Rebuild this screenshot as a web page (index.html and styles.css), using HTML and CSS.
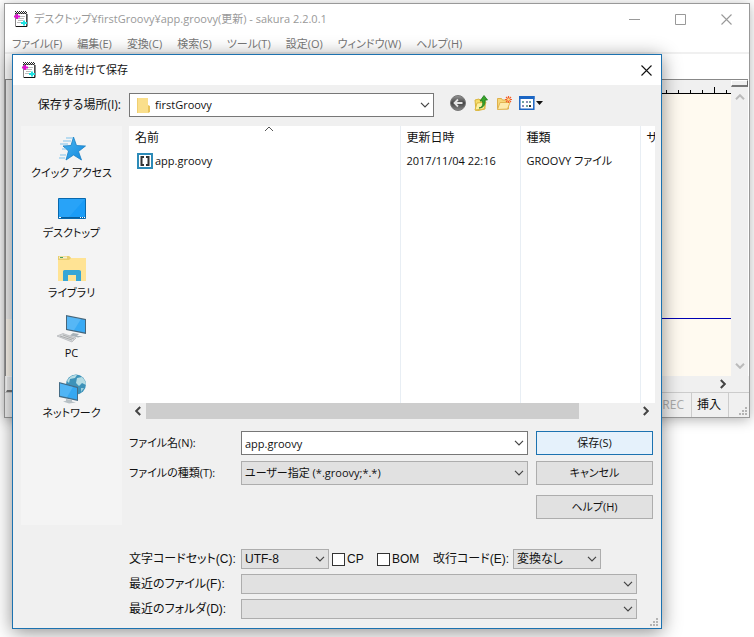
FILE: index.html
```
<!DOCTYPE html>
<html lang="ja">
<head>
  <meta charset="UTF-8">
  <meta name="viewport" content="width=device-width, initial-scale=1">
  <title>名前を付けて保存</title>
  <link rel="stylesheet" href="styles.css">
</head>
<body>
  <svg class="defs" aria-hidden="true">
    <symbol id="chevron" viewBox="0 0 10 6"><path d="M1 .8l4 4 4-4" fill="none" stroke="currentColor" stroke-width="1.2"/></symbol>
    <symbol id="arrow" viewBox="0 0 10 6"><path d="M1 .8l4 4 4-4" fill="none" stroke="currentColor" stroke-width="2"/></symbol>
    <symbol id="close" viewBox="0 0 11 11"><path d="M.5.5l10 10M10.5.5l-10 10" fill="none" stroke="currentColor" stroke-width="1.1"/></symbol>
    <symbol id="notepad" viewBox="0 0 14 16">
      <path d="M1.500 2.500h11v13h-11z" fill="#fff" stroke="#888"/>
      <path d="M13 3v12.500H2" fill="none" stroke="#111"/>
      <path d="M1 .5h12M2 1.500h12M1 2.500h12" stroke="#222" stroke-dasharray="1 1"/>
      <path d="M5 5.500h6M4 7.500h6M4 9.500h5M3 11.500h5" stroke="#bbb"/>
      <path d="M2 3h2v1.500h2v2H4V8H2V6.500H0v-2h2z" fill="#e010d0"/>
      <path d="M9 9.500h2V11h2v2h-2v1.500H9V13H7v-2h2z" fill="#20e0e0"/>
    </symbol>
    <symbol id="grip" viewBox="0 0 8 8"><path d="M6 0h2v2H6zM3 3h2v2H3zM6 3h2v2H6zM0 6h2v2H0zM3 6h2v2H3zM6 6h2v2H6z" fill="#b4b4b4"/></symbol>
  </svg>

  <!-- エディタ本体 -->
  <div class="window">
    <header class="titlebar">
      <svg class="app-icon"><use href="#notepad"/></svg>
      <span class="title">デスクトップ¥firstGroovy¥app.groovy(更新) - sakura 2.2.0.1</span>
      <button class="winbtn" aria-label="最小化"><svg viewBox="0 0 11 11"><path d="M0 5.500h11" stroke="currentColor"/></svg></button>
      <button class="winbtn" aria-label="最大化"><svg viewBox="0 0 11 11"><path d="M.5.5h10v10H.5z" fill="none" stroke="currentColor"/></svg></button>
      <button class="winbtn" aria-label="閉じる"><svg><use href="#close"/></svg></button>
    </header>
    <nav class="menu">
      <a href="#">ファイル(F)</a>
      <a href="#">編集(E)</a>
      <a href="#">変換(C)</a>
      <a href="#">検索(S)</a>
      <a href="#">ツール(T)</a>
      <a href="#">設定(O)</a>
      <a href="#">ウィンドウ(W)</a>
      <a href="#">ヘルプ(H)</a>
    </nav>
    <div class="toolbar"></div>
    <div class="editor">
      <div class="gutter"></div>
      <div class="page">
        <div class="ruler"></div>
        <div class="lines"></div>
      </div>
      <div class="vscroll">
        <span class="splitter"></span>
        <svg class="up"><use href="#arrow"/></svg>
        <svg class="down"><use href="#arrow"/></svg>
      </div>
    </div>
    <div class="hscroll">
      <span class="pane"></span>
      <svg class="right"><use href="#arrow"/></svg>
    </div>
    <footer class="status">
      <span class="off">REC</span>
      <span>挿入</span>
      <span class="corner"><svg><use href="#grip"/></svg></span>
    </footer>
  </div>

  <!-- 保存ダイアログ -->
  <div class="dialog" role="dialog" aria-labelledby="dialogTitle">
    <header class="titlebar">
      <svg class="app-icon"><use href="#notepad"/></svg>
      <span class="title" id="dialogTitle">名前を付けて保存</span>
      <button class="winbtn" aria-label="閉じる"><svg><use href="#close"/></svg></button>
    </header>

    <div class="lookin">
      <label for="lookin">保存する場所(I):</label>
      <div class="combo white folder">
        <svg class="folder-icon" viewBox="0 0 13 16"><path d="M0 1h11v15H0z" fill="#fadf8c"/><path d="M11 1v15l2-1V9l-2-1z" fill="#e9c35c"/><path d="M.5 1v15" stroke="#f0cf72"/></svg>
        <select id="lookin"><option>firstGroovy</option></select>
        <svg class="chev"><use href="#chevron"/></svg>
      </div>
      <div class="tools">
        <button aria-label="戻る"><svg viewBox="0 0 16 16"><defs><linearGradient id="ball" x2="0" y2="1"><stop stop-color="#999"/><stop offset=".5" stop-color="#444"/><stop offset="1" stop-color="#888"/></linearGradient></defs><circle cx="8" cy="8" r="7.500" fill="url(#ball)" stroke="#777"/><path d="M12.500 8H5M8 4.500L4.500 8 8 11.500" fill="none" stroke="#e4e4e4" stroke-width="1.800"/></svg></button>
        <button aria-label="上へ"><svg viewBox="0 0 16 16"><path d="M2 5l4-1 1 1 5-1v10l-9 2z" fill="#f6dc68" stroke="#d9b53c"/><path d="M2 15l2-7 9-1-2 7z" fill="#fdf0a0" stroke="#dcb840"/><path d="M6 13c4-1 4-4 3.500-7H7l4-5.500L14.500 5H12c.5 4-1 8-6 8z" fill="#37a52c" stroke="#217a1c" stroke-width=".8"/></svg></button>
        <button aria-label="新しいフォルダー"><svg viewBox="0 0 16 16"><path d="M1.500 3.500h4l1 1.500h6v9h-11z" fill="#f6d778" stroke="#dfb04a"/><path d="M1.500 14.500l2.500-7h10l-2.500 6.500z" fill="#fdebac" stroke="#e2b653"/><path d="M12.500 1v7M9 4.500h7M10 2l5 5M15 2l-5 5" stroke="#f2602c" stroke-width="1.200"/><circle cx="12.500" cy="4.500" r="1.300" fill="#ffe08a"/></svg></button>
        <button class="view" aria-label="表示"><svg viewBox="0 0 24 16"><path d="M.8 1.800h14v12.500H.8z" fill="#fff" stroke="#1c66c4" stroke-width="1.500"/><path d="M0 1h15.500v3H0z" fill="#1c66c4"/><path d="M3 6h2v2H3zM10 6h2v2h-2zM7 10h2v2H7z" fill="#71a5a0"/><path d="M7 6h2v2H7zM3 10h2v2H3z" fill="#8c8fb8"/><path d="M10 10h2v2h-2z" fill="#333"/><path d="M17 6h7l-3.500 4z" fill="#111"/></svg></button>
      </div>
    </div>

    <div class="main">
      <nav class="places">
        <a href="#">
          <svg viewBox="0 0 32 32"><defs><linearGradient id="blue" x2="1" y2="1"><stop stop-color="#49b7f2"/><stop offset="1" stop-color="#1387dc"/></linearGradient></defs><path d="M17.500 4l3 8.500 9 .5-7 5.500 3 8.500-8-5-7.500 5 2.500-9-5.500-5 8-.5z" fill="url(#blue)" stroke="#187fc4" stroke-width=".8"/><path d="M10 5h7M7 8h8M4 11h8M6 16h4M4 22h6M3 25h6" stroke="#7fc3ec"/></svg>
          クイック アクセス
        </a>
        <a href="#">
          <svg viewBox="0 0 32 32"><path d="M2.500 5.500h27v20h-27z" fill="#1a9cf7" stroke="#0868ad"/><path d="M3 6h26L13 24H3z" fill="#35a9fa" opacity=".5"/><path d="M3 24.500h26" stroke="#075d9c"/><path d="M3 24.500h2M24 24.500h1M26 24.500h1M28 24.500h1" stroke="#fff"/></svg>
          デスクトップ
        </a>
        <a href="#">
          <svg viewBox="0 0 32 32"><path d="M2 3h11l2 2h15v23H2z" fill="#ffe394"/><path d="M2 3h11l2 2-2 2H2z" fill="#e8ce6c"/><path d="M3 3.500h8v2H3z" fill="#f6efd0"/><path d="M4 4.500h3" stroke="#4aa45c"/><path d="M7 28V18.500q0-1.500 1.500-1.500h14.500q2 0 2 1.500V28h-5v-6h-8v6z" fill="#36a6d6"/></svg>
          ライブラリ
        </a>
        <a href="#">
          <svg viewBox="0 0 32 32"><path d="M10 2l20 4v15l-20-4z" fill="#476579"/><path d="M11 3.500l18 3.500v12.500l-18-3.500z" fill="#39aaf4"/><path d="M11 3.500L25 6l-7 11.200-7-1.300z" fill="#74c4f8" opacity=".5"/><path d="M17 20l6 1-2 2 6 0-5 1.500-8-2z" fill="#a8b2b8"/><path d="M1 23l6-2.500 13 4.500-4 4z" fill="#d5d8da" stroke="#a8aaac" stroke-width=".6"/><path d="M4 23l12 4M7 22l11 4" stroke="#999" stroke-width=".7"/></svg>
          PC
        </a>
        <a href="#">
          <svg viewBox="0 0 32 32"><circle cx="20" cy="11.500" r="10" fill="#3d92b9"/><path d="M11 8q4-7 10-6l-2 3-5 1-1 4zM21 5l5-1q4 4 4 8l-4-2-3 3-3-3z" fill="#b5dce4"/><path d="M25 15l3 0-3 4z" fill="#9bd0df"/><path d="M3 9l19 5v14L3 24z" fill="#456c86"/><path d="M4 10.500l17 4.500v11.500L4 22.800z" fill="#35a8f2"/><path d="M4 10.500l13 3.500-6 10.300-7-1.500z" fill="#6dc1f7" opacity=".5"/><path d="M10 26l6 1v1.500l4 1-7 1-6-2 3-.7z" fill="#b7c0c5"/></svg>
          ネットワーク
        </a>
      </nav>

      <div class="content">
        <div class="files">
          <table>
            <colgroup><col><col class="date"><col class="type"><col class="size"></colgroup>
            <thead>
              <tr>
                <th>名前<svg class="sort" viewBox="0 0 10 6"><path d="M1 5l4-4 4 4" fill="none" stroke="#555"/></svg></th>
                <th>更新日時</th>
                <th>種類</th>
                <th>サイズ</th>
              </tr>
            </thead>
            <tbody>
              <tr>
                <td><svg class="file-icon" viewBox="0 0 16 16"><path d="M0 0h16v16H0z" fill="#2d8bb8"/><path d="M2 2h12v12H2z" fill="#fff"/><path d="M7 4H4.500v8H7M9 4h2.500v8H9" fill="none" stroke="#333" stroke-width="2"/></svg>app.groovy</td>
                <td>2017/11/04 22:16</td>
                <td>GROOVY ファイル</td>
                <td></td>
              </tr>
              <tr class="rest"><td></td><td></td><td></td><td></td></tr>
            </tbody>
          </table>
        </div>
        <div class="scrollbar">
          <svg class="left"><use href="#arrow"/></svg>
          <div class="track"><div class="thumb"></div></div>
          <svg class="right"><use href="#arrow"/></svg>
        </div>

        <form class="form">
          <label for="filename">ファイル名(N):</label>
          <div class="combo white">
            <input id="filename" type="text" value="app.groovy">
            <svg class="chev"><use href="#chevron"/></svg>
          </div>
          <button type="button" class="btn default">保存(S)</button>

          <label for="filetype">ファイルの種類(T):</label>
          <div class="combo">
            <select id="filetype"><option>ユーザー指定 (*.groovy;*.*)</option></select>
            <svg class="chev"><use href="#chevron"/></svg>
          </div>
          <button type="button" class="btn">キャンセル</button>
          <button type="button" class="btn help">ヘルプ(H)</button>
        </form>
      </div>
    </div>

    <form class="extra">
      <label for="charset">文字コードセット(C):</label>
      <div class="options">
        <div class="combo short">
          <select id="charset"><option>UTF-8</option></select>
          <svg class="chev"><use href="#chevron"/></svg>
        </div>
        <label class="check cp"><input type="checkbox">CP</label>
        <label class="check bom"><input type="checkbox">BOM</label>
        <label class="eol" for="eol">改行コード(E):</label>
        <div class="combo short">
          <select id="eol"><option>変換なし</option></select>
          <svg class="chev"><use href="#chevron"/></svg>
        </div>
      </div>

      <label for="recentFile">最近のファイル(F):</label>
      <div class="combo">
        <select id="recentFile"></select>
        <svg class="chev"><use href="#chevron"/></svg>
      </div>

      <label for="recentFolder">最近のフォルダ(D):</label>
      <div class="combo">
        <select id="recentFolder"></select>
        <svg class="chev"><use href="#chevron"/></svg>
      </div>
    </form>
    <svg class="dialog-grip"><use href="#grip"/></svg>
  </div>
</body>
</html>
```
FILE: styles.css
```
* {
  box-sizing: border-box;
}
body {
  margin: 0;
  padding-top: 3px;
  min-height: 100vh;
  position: relative;
  overflow: hidden;
  background: #fff;
  color: #111;
  font-family: "Open Sans", "Noto Sans CJK JP", sans-serif;
  font-size: 11px;
  line-height: 16px;
  font-feature-settings: "palt";
}
a {
  color: inherit;
  text-decoration: none;
}
button, input, select {
  font: inherit;
  font-feature-settings: inherit;
  color: inherit;
  margin: 0;
}
svg {
  display: block;
  flex: none;
}
.defs {
  position: absolute;
  width: 0;
  height: 0;
}

/* エディタ本体 */
.window {
  margin: 0 4px;
  border: 1px solid #999;
  background: #fff;
  box-shadow: 0 2px 12px rgba(0, 0, 0, 0.3);
}
.titlebar {
  display: flex;
  align-items: center;
  height: 30px;
  padding-left: 9px;
  background: #fff;
}
.app-icon {
  width: 14px;
  height: 16px;
  margin-right: 6px;
}
.title {
  flex: 1;
  white-space: nowrap;
}
.window .titlebar {
  color: #999;
}
.winbtn {
  width: 46px;
  height: 30px;
  padding: 0;
  border: 0;
  background: none;
  display: flex;
  align-items: center;
  justify-content: center;
}
.winbtn svg {
  width: 11px;
  height: 11px;
}
.dialog .winbtn {
  width: 30px;
}
.menu {
  display: flex;
  gap: 15px;
  height: 20px;
  padding: 2px 7px 0;
  border-bottom: 2px solid #f0f0f0;
  color: #777;
  white-space: nowrap;
}
.toolbar {
  height: 25px;
}
.editor {
  display: flex;
  height: 297px;
  border-top: 1px solid #888;
  border-left: 1px solid #888;
  margin-right: 1px;
}
.gutter {
  width: 10px;
  background: linear-gradient(#f0f0f0 239px, #fffaf0 239px);
}
.page {
  flex: 1;
  display: flex;
  flex-direction: column;
  background: #fffaf0;
}
/* 目盛り: 小 12px、大 120px */
.ruler {
  height: 14px;
  border-bottom: 1px solid #000;
  background:
    repeating-linear-gradient(to right, transparent 0 98px, #000 98px 99px, transparent 99px 120px) 0 100% / 100% 6px no-repeat,
    repeating-linear-gradient(to right, transparent 0 2px, #000 2px 3px, transparent 3px 12px) 0 100% / 100% 3px no-repeat,
    #f0f0f0;
}
.lines {
  height: 225px;
  border-bottom: 1px solid #0000b4;
}
.vscroll {
  width: 17px;
  display: flex;
  flex-direction: column;
  align-items: center;
  background: #f0f0f0;
  color: #bbb;
}
.splitter {
  width: 17px;
  height: 7px;
  background: #f0f0f0;
  border: 1px solid #fff;
  border-right-color: #666;
  border-bottom: 2px solid #777;
}
.up, .down, .left, .right {
  width: 10px;
  height: 6px;
}
.up {
  margin-top: 7px;
  transform: rotate(180deg);
}
.down {
  margin-top: auto;
  margin-bottom: 7px;
}
.left {
  transform: rotate(90deg);
}
.right {
  transform: rotate(-90deg);
}
.hscroll {
  height: 16px;
  display: flex;
  align-items: center;
  justify-content: space-between;
  padding: 0 21px 0 1px;
  background: #f0f0f0;
  color: #444;
}
.pane {
  width: 8px;
  height: 16px;
  border: 1px solid #fff;
  border-right-color: #666;
  border-bottom: 2px solid #777;
}
.status {
  display: flex;
  justify-content: flex-end;
  height: 25px;
  border-top: 1px solid #ccc;
  background: #f0f0f0;
  font-size: 12px;
}
.status span {
  padding: 4px 7px 0 5px;
  border-right: 1px solid #ccc;
}
.status .off {
  color: #aaa;
}
.status .corner {
  display: flex;
  align-items: flex-end;
  justify-content: flex-end;
  width: 20px;
  padding: 2px;
  border: 0;
}
.corner svg, .dialog-grip {
  width: 8px;
  height: 8px;
}

/* ダイアログ */
.dialog {
  position: absolute;
  top: 54px;
  left: 12px;
  right: 92px;
  padding-bottom: 9px;
  border: 1px solid #1c72b0;
  background: #f0f0f0;
  box-shadow: 0 3px 18px rgba(0, 0, 0, 0.45);
}
.lookin {
  display: flex;
  align-items: center;
  padding: 8px 8px 9px;
}
.lookin label {
  width: 100px;
  margin-right: 8px;
  font-size: 12px;
  text-align: right;
}
.lookin .combo {
  flex: 1;
}
.combo {
  position: relative;
  height: 24px;
}
.combo select, .combo input {
  display: block;
  width: 100%;
  height: 100%;
  padding: 0 20px 0 3px;
  border: 1px solid #adadad;
  border-radius: 0;
  background: #e1e1e1;
  appearance: none;
  outline: 0;
}
.combo.white select, .combo.white input {
  border-color: #777;
  background: #fff;
}
.combo.folder select {
  padding-left: 25px;
}
.folder-icon {
  position: absolute;
  top: 4px;
  left: 8px;
  width: 13px;
  height: 16px;
}
.chev {
  position: absolute;
  top: calc(50% - 3px);
  right: 4px;
  width: 10px;
  height: 6px;
  color: #444;
  pointer-events: none;
}
.tools {
  display: flex;
  gap: 7px;
  width: 219px;
  padding: 0 0 5px 16px;
}
.tools button {
  padding: 0;
  border: 0;
  background: none;
}
.tools svg {
  width: 16px;
  height: 16px;
}
.tools .view svg {
  width: 24px;
}
.main {
  display: flex;
  gap: 7px;
  padding: 0 6px 0 8px;
}
.places {
  width: 101px;
  display: flex;
  flex-direction: column;
  gap: 12px;
  padding-top: 7px;
  background: #f4f4f4;
  text-align: center;
  white-space: nowrap;
}
.places svg {
  width: 32px;
  height: 32px;
  margin: 0 auto;
}
.content {
  flex: 1;
  min-width: 0;
}
.files {
  height: 277px;
  overflow: hidden;
  background: #fff;
}
.files table {
  width: 100%;
  height: 100%;
  table-layout: fixed;
  border-collapse: collapse;
}
.date, .type {
  width: 120px;
}
.size {
  width: 15px;
}
th, td {
  height: 23px;
  padding: 0 6px;
  border-left: 1px solid #e8eef4;
  font-weight: normal;
  text-align: left;
  white-space: nowrap;
  overflow: hidden;
}
th {
  position: relative;
  font-size: 12px;
}
th:first-child, td:first-child {
  border-left: 0;
}
.files td:first-child {
  padding-left: 8px;
}
.rest td {
  height: auto;
}
.sort {
  position: absolute;
  top: 0;
  left: 50%;
  width: 10px;
  height: 6px;
}
.file-icon {
  display: inline-block;
  width: 16px;
  height: 16px;
  margin-right: 2px;
  vertical-align: top;
}
.scrollbar {
  display: flex;
  align-items: center;
  gap: 3px;
  height: 16px;
  padding: 0 4px;
  color: #444;
}
.track {
  flex: 1;
  height: 16px;
}
.thumb {
  width: 88%;
  height: 100%;
  background: #cdcdcd;
}
.form {
  display: grid;
  grid-template-columns: 104px 1fr 117px;
  align-items: center;
  gap: 6px 8px;
  padding: 12px 2px 6px 0;
}
.btn {
  height: 24px;
  padding: 0;
  border: 1px solid #adadad;
  background: #e1e1e1;
}
.btn.default {
  border-color: #1c72b0;
  background: #e5f1fb;
}
.btn.help {
  grid-column: 3;
  margin-top: 4px;
}
.extra {
  display: grid;
  grid-template-columns: 112px 1fr;
  align-items: center;
  gap: 5px 0;
  margin: 24px 24px 0 116px;
  font-family: "Liberation Sans", "Noto Sans CJK JP", sans-serif;
  font-size: 12px;
  white-space: nowrap;
}
.extra .combo {
  height: 20px;
}
.options {
  display: flex;
  align-items: center;
}
.combo.short {
  width: 88px;
}
.check {
  display: flex;
  align-items: center;
  gap: 2px;
  margin-left: 3px;
}
.cp {
  width: 42px;
}
.bom {
  width: 54px;
}
.check input {
  width: 13px;
  height: 13px;
  border: 1px solid #333;
  background: #fff;
  appearance: none;
}
.eol {
  width: 80px;
  margin-left: 2px;
}
.dialog-grip {
  position: absolute;
  right: 3px;
  bottom: 2px;
}
```
